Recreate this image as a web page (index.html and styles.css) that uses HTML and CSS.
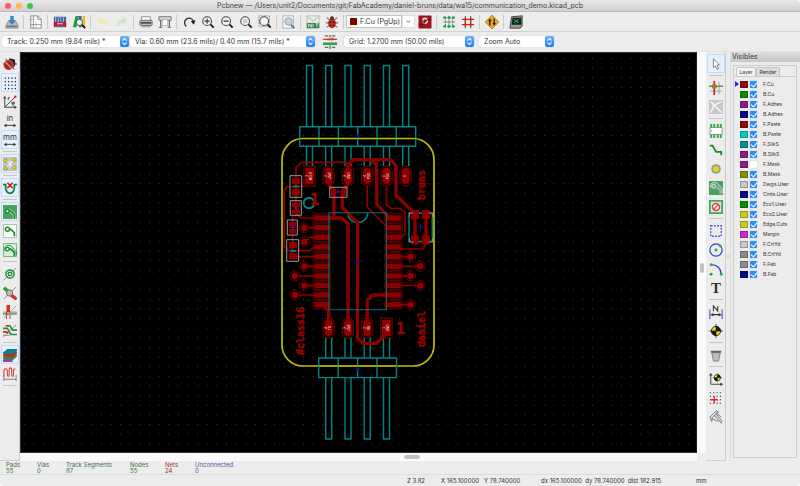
FILE: index.html
```html
<!DOCTYPE html>
<html lang="en">
<head>
<meta charset="utf-8">
<title>Pcbnew</title>
<link rel="stylesheet" href="styles.css">
</head>
<body>
<svg class="defs" aria-hidden="true">
  <defs>
    <symbol id="steps" viewBox="0 0 9 11"><path d="M2.5 4.5 4.5 2.3 6.5 4.5M2.5 6.5 4.5 8.7 6.5 6.5" fill="none" stroke="#fff" stroke-width="1.1"/></symbol>
    <symbol id="lens" viewBox="0 0 16 16"><path d="m10.5 10.5 4 4" stroke="#222" stroke-width="2.2"/><circle cx="7" cy="7" r="5" fill="#f4f4f4" stroke="#444" stroke-width="1.2"/></symbol>
    <symbol id="zone" viewBox="0 0 16 16"><path d="M2 9V5l2-2h5l6 7v4" fill="none" stroke="#178a2a" stroke-width="1"/><circle cx="5" cy="7" r="2" fill="#fff" stroke="#178a2a" stroke-width="1.6"/><path d="M7 7h2l4 4v4" fill="none" stroke="#178a2a" stroke-width="2"/></symbol>
    <symbol id="target" viewBox="0 0 16 16"><circle cx="8" cy="8" r="5.3" fill="#e8df20" stroke="#111"/><path d="M8 8V2.700A5.300 5.300 0 0 1 13.300 8zM8 8v5.300A5.300 5.300 0 0 1 2.700 8z" fill="#111"/><path d="M8 0v16M0 8h16" stroke="#111" stroke-width=".8"/></symbol>
  </defs>
</svg>
<div class="window">
  <header class="titlebar">
    <div class="lights"><i class="close"></i><i class="minimise"></i><i class="expand"></i></div>
    <h1>Pcbnew — /Users/unit2/Documents/git/FabAcademy/daniel-bruns/data/wa15/communication_demo.kicad_pcb</h1>
  </header>

  <div class="toolbar main-tools">
    <button aria-label="Save"><svg viewBox="0 0 16 16"><path d="M3 8h10l2 4v3H1v-3z" fill="#b9bdc0" stroke="#888" stroke-width=".8"/><path d="M2 12h12v2H2z" fill="#777"/><path d="M6 1h4v5h3l-5 5-5-5h3z" fill="#3a86c8"/></svg></button>
    <hr>
    <button aria-label="Page settings"><svg viewBox="0 0 16 16"><path d="M2 1h8l4 4v10H2z" fill="#fff" stroke="#777" stroke-width=".9"/><path d="M10 1v4h4M5 1v14M2 11h12" fill="none" stroke="#777" stroke-width=".8"/><path d="M0 5h7M8 8v8" stroke="#999" stroke-width=".6"/></svg></button>
    <hr>
    <button aria-label="Module editor"><svg viewBox="0 0 16 16"><path d="M1 2h14v12H1z" fill="#3f63a0"/><path d="M3 1v13M6 1v13M9 1v13M12 1v13" stroke="#adc3e4"/><path d="M1 8h4v5H1zM6 8h4v5H6zM11 8h4v5h-4z" fill="#c41420"/><path d="M5 10h6" stroke="#fff"/></svg></button>
    <button aria-label="Module viewer"><svg viewBox="0 0 16 16"><path d="M1 14 4 1h4L5 14z" fill="#19a33b"/><path d="M8 1h3v13H8z" fill="#2967b1"/><path d="M12 1h3v13h-3z" fill="#e7bd18"/><path d="m11 11 4 4" stroke="#111" stroke-width="2"/><circle cx="8.500" cy="8.500" r="3.600" fill="#e6eef5" stroke="#444"/></svg></button>
    <hr>
    <button aria-label="Undo"><svg viewBox="0 0 16 16"><path d="m2 6 5-4v3c5 0 8 3 6 9-1-4-3-5-6-5v2z" fill="#f3e7a4"/></svg></button>
    <button aria-label="Redo"><svg viewBox="0 0 16 16"><path d="M14 6 9 2v3c-5 0-8 3-6 9 1-4 3-5 6-5v2z" fill="#c9e6c2"/></svg></button>
    <hr>
    <button aria-label="Print"><svg viewBox="0 0 16 16"><path d="M3 2h10v5H3z" fill="#fff" stroke="#888"/><rect x="1" y="6" width="14" height="6" rx="1" fill="#bbb" stroke="#666"/><path d="M2 9h12" stroke="#222" stroke-width="1.500"/><path d="M3 13h10v1H3z" fill="#777"/></svg></button>
    <button aria-label="Plot"><svg viewBox="0 0 16 16"><path d="M1 2h14v4H1z" fill="#ddd" stroke="#666"/><path d="M3 6v8M13 6v8M1 14h4M11 14h4" stroke="#666" stroke-width="1.300"/><path d="M5 5h6v7H5z" fill="#fff" stroke="#999" stroke-width=".7"/></svg></button>
    <hr>
    <button aria-label="Redraw"><svg viewBox="0 0 16 16"><path d="M5 13A5.200 5.200 0 1 1 13 7" fill="none" stroke="#333" stroke-width="1.500"/><path d="m10 7 5.500-1-2 5z" fill="#222"/></svg></button>
    <button aria-label="Zoom in"><svg viewBox="0 0 16 16"><use href="#lens"/><path d="M4 7h6M7 4v6" stroke="#333" stroke-width="1.200"/></svg></button>
    <button aria-label="Zoom out"><svg viewBox="0 0 16 16"><use href="#lens"/><path d="M4 7h6" stroke="#333" stroke-width="1.200"/></svg></button>
    <button aria-label="Zoom to fit"><svg viewBox="0 0 16 16"><use href="#lens"/><path d="M4.500 4.500h5v5h-5z" fill="#ccc"/></svg></button>
    <button aria-label="Zoom to selection"><svg viewBox="0 0 16 16"><path d="M1 1h12v12H1z" fill="none" stroke="#888" stroke-dasharray="2 1"/><use href="#lens"/></svg></button>
    <hr>
    <button aria-label="Find"><svg viewBox="0 0 16 16"><path d="M1 1h12v14H1z" fill="#fafafa" stroke="#aaa"/><path d="m10 11 4 4" stroke="#666" stroke-width="2"/><circle cx="7.500" cy="7.500" r="4.300" fill="#c2d5e6" stroke="#8997a3"/></svg></button>
    <hr>
    <button aria-label="Netlist"><svg viewBox="0 0 16 16"><path d="M1 1h14v14H1z" fill="#e7efe6" stroke="#9aad98" stroke-width=".7"/><path d="m2 2 6 5 6-5" fill="none" stroke="#aaa"/><path d="M1 9h14v6H1z" fill="#27824a"/><path d="M3 14v-4l3 4v-4M8 10v4M11 10h3M12.500 10v4" fill="none" stroke="#fff" stroke-width=".9"/></svg></button>
    <button aria-label="Design rules check"><svg viewBox="0 0 16 16"><path d="m2 3 4 3M14 3l-4 3M1 9h14M2 14l4-3M14 14l-4-3" stroke="#333"/><ellipse cx="8" cy="9.500" rx="4.500" ry="5.500" fill="#cf2c20"/><circle cx="8" cy="3.500" r="2.200" fill="#552522"/><path d="M8 4v11" stroke="#741"/><circle cx="6" cy="8" r="1" fill="#411"/><circle cx="10" cy="8" r="1" fill="#411"/><circle cx="6" cy="12" r="1" fill="#411"/><circle cx="10" cy="12" r="1" fill="#411"/></svg></button>
    <hr>
    <div class="layer-pick"><span class="chip"></span><select aria-label="Layer"><option>F.Cu (PgUp)</option></select><svg viewBox="0 0 13 13"><path d="m4.500 5.500 2 2 2-2" fill="none" stroke="#444"/></svg></div>
    <button aria-label="Layer pair"><svg viewBox="0 0 16 16"><path d="M1 1h14v14H1z" fill="#a8121a" stroke="#711" stroke-width=".7"/><path d="M1 11h4l6-6h4" fill="none" stroke="#6e0c12" stroke-width="2"/><circle cx="8" cy="6.500" r="3.600" fill="#d8d8d8"/><circle cx="8" cy="6.500" r="1.500" fill="#333"/><path d="m3 4 4 5 6-6" fill="none" stroke="#a8121a" stroke-width="1.500"/></svg></button>
    <hr>
    <button aria-label="Footprint mode"><svg viewBox="0 0 16 16"><path d="M4 3h8v10H4z" fill="none" stroke="#666" stroke-dasharray="1.500 1"/><path d="M1 8h14M8 1v14" stroke="#666" stroke-width=".8"/><g fill="#22a546"><circle cx="3" cy="3" r="1.700"/><circle cx="8" cy="3" r="1.700"/><circle cx="13" cy="3" r="1.700"/><circle cx="3" cy="13" r="1.700"/><circle cx="8" cy="13" r="1.700"/><circle cx="13" cy="13" r="1.700"/></g></svg></button>
    <button aria-label="Track mode"><svg viewBox="0 0 16 16"><path d="M5 1v14M11 1v14" stroke="#2aa44a" stroke-width="1.500"/><path d="M1 5h14M1 11h14" stroke="#d72020" stroke-width="1.500"/><path d="M5 3v10M11 3v10" stroke="#d72020" stroke-width="1.500"/></svg></button>
    <hr>
    <button aria-label="Autorouter"><svg viewBox="0 0 16 16"><path d="m8 0 8 8-8 8-8-8z" fill="#e9a61c" stroke="#8a6410" stroke-width=".6"/><path d="M5.500 12V5M10.500 4v7" stroke="#222" stroke-width="1.500"/><path d="M3.500 7 5.500 4l2 3zM8.500 9l2 3 2-3z" fill="#222"/></svg></button>
    <hr>
    <button aria-label="Scripting console"><svg viewBox="0 0 16 16"><path d="m3 2 12-1v11l-2 3H1z" fill="#999" stroke="#333"/><path d="M4 3h10v8H3z" fill="#112217"/><path d="m6 5 5 4M11 5 6 9" fill="none" stroke="#2db060" stroke-width="1.300"/></svg></button>
  </div>

  <div class="toolbar option-tools">
    <div class="pick width-pick"><select aria-label="Track width"><option>Track: 0.250 mm (9.84 mils) *</option></select><svg><use href="#steps"/></svg></div>
    <div class="pick via"><select aria-label="Via size"><option>Via: 0.60 mm (23.6 mils)/ 0.40 mm (15.7 mils) *</option></select><svg><use href="#steps"/></svg></div>
    <button aria-label="Automatic track width"><svg viewBox="0 0 16 16"><path d="M0 5h6M8 5h8" stroke="#d33" stroke-width="1.500"/><path d="M5 5h6V3" fill="none" stroke="#d33" stroke-width="2"/><path d="M0 10h16" stroke="#2a4" stroke-width="3"/><path d="M8 0v3M8 12v4M2 1h4M10 1h4M2 14h4M10 14h4" stroke="#333"/></svg></button>
    <div class="pick grid-size"><select aria-label="Grid"><option>Grid: 1.2700 mm (50.00 mils)</option></select><svg><use href="#steps"/></svg></div>
    <div class="pick zoom"><select aria-label="Zoom"><option>Zoom Auto</option></select><svg><use href="#steps"/></svg></div>
  </div>

  <main class="workspace">
    <div class="side left">
      <button aria-label="Disable DRC"><svg viewBox="0 0 16 16"><path d="m3 2 10 12M14 3 3 13M0 8h16M8 1v5" stroke="#222"/><ellipse cx="10" cy="7" rx="4" ry="5" fill="#222"/><circle cx="6.500" cy="9" r="5" fill="#8a2f2d" stroke="#ce3d35" stroke-width="1.700"/><path d="m3 6 7 7" stroke="#e88" stroke-width="1.500"/></svg></button>
      <button class="on" aria-label="Show grid"><svg viewBox="0 0 16 16"><path d="M2 2.500h13M2 6.500h13M2 10.500h13M2 14.500h13" stroke="#111" stroke-width="1.300" stroke-dasharray="1.300 2.500"/></svg></button>
      <button aria-label="Polar coordinates"><svg viewBox="0 0 16 16"><path d="M2 2v12h13M2 14 14 2" fill="none" stroke="#444" stroke-width="1.100"/><path d="m0 4 2-3 2 3zM13 12l3 2-3 2z" fill="#444"/><circle cx="14" cy="2" r="1.500" fill="#e22"/><path d="M6 6V3h2M10 8v2h3V8h-1.500v5" fill="none" stroke="#444"/></svg></button>
      <button aria-label="Inches"><svg viewBox="0 0 16 16"><text x="8" y="8">in</text><path d="M2 13h12" stroke="#333"/><path d="m1 13 3-2v4zM15 13l-3-2v4z" fill="#333"/></svg></button>
      <button class="on" aria-label="Millimetres"><svg viewBox="0 0 16 16"><text x="8" y="8">mm</text><path d="M2 13h12" stroke="#333"/><path d="m1 13 3-2v4zM15 13l-3-2v4z" fill="#333"/></svg></button>
      <hr>
      <button class="on" aria-label="Ratsnest"><svg viewBox="0 0 16 16"><path d="M0 0h16v16H0z" fill="#c4c4c4"/><path d="m3 3 10 10M13 3 3 13M8 4v9" stroke="#fff"/><g fill="#dfd51d" stroke="#887f10" stroke-width=".6"><circle cx="3" cy="4" r="2"/><circle cx="13" cy="3" r="2"/><circle cx="3" cy="13" r="2"/><circle cx="13" cy="12" r="2"/></g></svg></button>
      <hr>
      <button class="on" aria-label="Auto delete track"><svg viewBox="0 0 16 16"><path d="M0 4h3v4q1 6 5 6t5-6V4h3" fill="none" stroke="#15803a" stroke-width="2"/><path d="m5 2 6 6m0-6L5 8" stroke="#d91515" stroke-width="2"/></svg></button>
      <hr>
      <button class="on" aria-label="Show filled zones"><svg viewBox="0 0 16 16"><path d="M0 0h16v16H0z" fill="#46a65e"/><path d="M2 9V5l2-2h5l6 7v4" fill="none" stroke="#e4f4e7" stroke-width=".9"/><path d="M7 7h2l4 4v4" fill="none" stroke="#e4f4e7" stroke-width="3.400"/><use href="#zone"/></svg></button>
      <button aria-label="Hide filled zones"><svg viewBox="0 0 16 16"><path d="M.5.5h15v15H.5z" fill="#fff" stroke="#8fc39a"/><circle cx="5" cy="6" r="2.300" fill="none" stroke="#178a2a" stroke-width="1.700"/><path d="M7 6h2l4 4v4" fill="none" stroke="#178a2a" stroke-width="2"/></svg></button>
      <button aria-label="Zone outlines"><svg viewBox="0 0 16 16"><path d="M.5.5h15v15H.5z" fill="#d9ecdc" stroke="#5fae70"/><use href="#zone"/></svg></button>
      <hr>
      <button aria-label="Via outlines"><svg viewBox="0 0 16 16"><path d="M1 15 15 1" stroke="#888"/><circle cx="8" cy="8" r="4.700" fill="none" stroke="#248e40" stroke-width="1.700"/><circle cx="8" cy="8" r="2" fill="#fff" stroke="#248e40" stroke-width="1.700"/></svg></button>
      <button aria-label="Pad outlines"><svg viewBox="0 0 16 16"><path d="M1 15 15 1" stroke="#888"/><path d="m1 2 6 5" stroke="#2aa03c" stroke-width="4"/><path d="m9 10 5 4" stroke="#e02a20" stroke-width="4" stroke-linecap="round"/><circle cx="7.500" cy="8" r="3.600" fill="#bbb" stroke="#666"/></svg></button>
      <button aria-label="Track outlines"><svg viewBox="0 0 16 16"><path d="M1 15 15 1M0 8h16M0 11h16" stroke="#777" stroke-width=".7"/><path d="M0 9.500h7M9 9.500h7" stroke="#289145" stroke-width="1.200"/><path d="M6 0v8" stroke="#e02a20" stroke-width="4"/><path d="M4 8v8M8 8v8" stroke="#e02a20"/></svg></button>
      <button aria-label="High contrast"><svg viewBox="0 0 16 16"><path d="M0 15 15 1M0 13h7l3-3" fill="none" stroke="#888"/><path d="M0 5h5l4 7h7" fill="none" stroke="#289145" stroke-width="1.800"/><path d="M5 2h3l3 5h5" fill="none" stroke="#248e40" stroke-width="1.800"/><path d="M3 2h4M0 9h4l2 2" fill="none" stroke="#d22" stroke-width="1.800"/></svg></button>
      <hr>
      <button class="on" aria-label="Layers manager"><svg viewBox="0 0 16 16"><path d="m0 14 5-4h11l-5 4v2H0z" fill="#a03ab4"/><path d="m0 11 5-4h11v2l-5 4H0z" fill="#239044"/><path d="m0 8 5-4h11v2l-5 4H0z" fill="#d22020"/><path d="m0 5 5-4h11v2l-5 4H0z" fill="#137f86"/></svg></button>
      <button aria-label="Microwave tools"><svg viewBox="0 0 16 16"><path d="M1 11V5q0-3 2-3t2 3v4q0 1.500 1 1.500T7 9V4q0-3 1.500-3T10 4v5q0 1.500 1 1.500T12 9V5q0-3 2-3" fill="none" stroke="#d34040" stroke-width="1.200"/><path d="M1 9v7M15 9v7M1 14h14" stroke="#666" stroke-width=".9"/></svg></button>
      <hr>
    </div>

    <svg class="board" viewBox="20 52 677 401" preserveAspectRatio="xMidYMid slice" role="img" aria-label="Printed circuit board">
      <defs>
        <pattern id="dots" x="23.800" y="58" width="9.630" height="9.630" patternUnits="userSpaceOnUse"><path d="M0 0h1v1H0z" fill="#3c3c3c"/></pattern>
        <g id="oval"><rect x="-5.700" y="-10" width="11.400" height="20" rx="5.700" fill="#100" stroke="#700000"/><rect x="-4" y="-8" width="8" height="16" rx="4" fill="#940000"/></g>
        <g id="square"><rect x="-5.700" y="-10" width="11.400" height="20" fill="#100" stroke="#700000"/><rect x="-4.300" y="-8" width="8.600" height="16" fill="#940000"/></g>
        <g id="smd"><rect x="-9" y="-4.300" width="18" height="8.600" rx="2" fill="#1c0000" stroke="#6c0000" stroke-width=".8"/><rect x="-7.500" y="-2.600" width="15" height="5.200" fill="#8c0000"/></g>
        <g id="dot"><circle r="5" fill="none" stroke="#700000" stroke-width=".9"/><circle r="3.200" fill="#940000"/></g>
        <g id="column"><use href="#smd" y="218"/><use href="#smd" y="227.700"/><use href="#smd" y="237.300"/><use href="#smd" y="247"/><use href="#smd" y="256.700"/><use href="#smd" y="266.300"/><use href="#smd" y="276"/><use href="#smd" y="285.500"/><use href="#smd" y="295"/><use href="#smd" y="304.700"/></g>
      </defs>
      <path d="M20 52h677v401H20z" fill="#000"/>
      <path d="M22 54h673v397H22z" fill="url(#dots)"/>
      <path d="M21 52.500h676v400H20.500v-400" fill="none" stroke="#333"/>
      <rect x="282" y="138.500" width="152" height="227.500" rx="21" fill="none" stroke="#bcbc00" stroke-width="1.700"/>
      <g class="fab">
        <path d="M306.500 126.700V65.500h6v61.200m13.200 0V65.500h6v61.200m13.300 0V65.500h6v61.200m13.200 0V65.500h6v61.200m13.300 0V65.500h6v61.200m13.200 0V65.500h6v61.200"/>
        <path d="M306.500 146v20m6-20v20m13.200-20v20m6-20v20m13.300-20v20m6-20v20m13.200-20v20m6-20v20m13.300-20v20m6-20v20m13.200-20v20m6-20v20"/>
        <path d="M325.700 338v20m6-20v20m13.300-20v20m6-20v20m13.200-20v20m6-20v20m13.300-20v20m6-20v20"/>
        <path d="M325.700 378v61h6v-61m13.300 0v61h6v-61m13.200 0v61h6v-61m13.300 0v61h6v-61"/>
        <path d="M299.700 126.700h116v19.600h-116zM319 126.700v19.600m19.400-19.600v19.600m19.300-19.600v19.600m19.300-19.600v19.600m19.300-19.600v19.600M318.700 358h77.800v19.600h-77.800zM338.200 358v19.600m19.400-19.600v19.600m19.400-19.600v19.600"/>
        <path d="M347.700 212.700a10 10 0 0 0 20 0M409 213.300h23.300v28.200H409z"/>
        <circle cx="309" cy="203" r="5.300" stroke-width="1.900"/>
      </g>
      <path d="M300 138.500h116M319 366h77" stroke="#bcbc00" stroke-width="1.200"/>
      <use href="#column" x="322"/><use href="#column" x="393.500"/>
      <g class="copper thin">
        <path d="M348 164l-2-1.700h-44.300l-5.700 5V214l5 4h16M309.500 182v4l-23 1-2.200 4v56l3.700 3.700h22l4-3.700M292.500 216v38l4 2.700h22"/>
        <path d="M367.200 180v27l18 18M386.500 180v25l4.500 3.500h9l5 4V234l-4 3.300M426 243l-3 6h-22"/>
        <path d="M304.300 227.700H318M304.300 242l5-4.700h9M304.300 266.300H318M295 276h24M304.300 285.500H318M295 295h24M410.700 256.700H398M420.300 266.300H398M410.700 276H398M420.300 285.500H398M410.700 304.700H398"/>
      </g>
      <g class="copper thick">
        <path d="M348 174v-8l4.700-6.300h38l5.300 6.300v29l16 16M370 159.700l6.700 5V204l11 12M328.700 178v6l5.300 7v27M348 178v6l-5.700 8v15.500l15.200 15V338l5.500 5.300h13.700l9.500-9.500V328M324 218h17.700l6.300 5.500V328M388 295h-15.500l-5.300 5.300V328M323 305l5.700 5.700V328"/>
        <path d="M415 214v26M426 214v26"/>
      </g>
      <path d="M329 212.700h57.300v97H329z" fill="none" stroke="#008484" stroke-width="1.100" opacity=".85"/>
      <use href="#square" x="309.500" y="176"/><use href="#oval" x="328.700" y="176"/><use href="#oval" x="348" y="176"/><use href="#oval" x="367.200" y="176"/><use href="#oval" x="386.500" y="176"/><use href="#oval" x="405.700" y="176"/>
      <use href="#oval" x="328.700" y="328"/><use href="#oval" x="348" y="328"/><use href="#oval" x="367.200" y="328"/><use href="#square" x="386.500" y="328"/>
      <path class="copper thick" d="M348 170v-4l4.700-6.300M328.700 182v2l3 4M348 182v2l-3 4M328.700 317v5M348 317v5M367.200 317v5M386.500 332l-5 6.500"/>
      <use href="#dot" x="304.300" y="227.700"/><use href="#dot" x="304.300" y="242"/><use href="#dot" x="304.300" y="266.300"/><use href="#dot" x="295" y="276"/><use href="#dot" x="304.300" y="285.500"/><use href="#dot" x="295" y="295"/>
      <use href="#dot" x="410.700" y="256.700"/><use href="#dot" x="420.300" y="266.300"/><use href="#dot" x="410.700" y="276"/><use href="#dot" x="420.300" y="285.500"/><use href="#dot" x="410.700" y="304.700"/>
      <g fill="#8c0000">
        <path d="M411 210h8v9h-8zM422 210h8v9h-8zM411 235.500h8v9h-8zM422 235.500h8v9h-8z"/>
        <path d="M292 178h8v6h-8zM292 189h8v6.500h-8zM292 202.500h8v4.500h-8zM292 209.500h8v4.500h-8zM289 222h7v4.500h-7zM289 229h7v4.500h-7zM289 242h8v6.500h-8zM289 253h8v6.500h-8zM331 189h5v7h-5zM341 189h5v7h-5z"/>
      </g>
      <path d="M290 175.700h11.700v21.600H290zM290.300 200.700h11v14.600h-11zM287.300 220h10v15h-10zM286.700 239.700h12v21.600h-12zM329.700 187.300H347v10h-17.300z" fill="none" stroke="#aaa" stroke-width=".9"/>
      <path d="M409.500 217v-4h4m15 0h4v4m0 21v4h-4m-15 0h-4v-4" fill="none" stroke="#899" stroke-width=".8"/>
      <path d="M293 186.500h6M290 251h6" stroke="#177" stroke-width="2"/>
      <path d="M296 205.500v5m-3-2.500h6m-6.500 17v5m-3-2.500h6m42.500-38v5m-3-2.500h6" stroke="#84008c" stroke-width=".9"/>
      <path d="M420.500 224v6m-3-3h6M357.500 134v4m-3-2h6m-3 231v4m-3-2h6m-3-109v4m-3-2h6" stroke="#1010a8" stroke-width=".9"/>
      <g class="silk">
        <text transform="translate(425 200) rotate(-90)">bruns</text>
        <text transform="translate(425 347) rotate(-90)">daniel</text>
        <text transform="translate(304 355) rotate(-90)">#class16</text>
        <text class="one" x="396" y="334">1</text>
        <text class="one" x="310" y="205">1</text>
      </g>
      <g class="pad-names">
        <text transform="translate(312 176) rotate(-90)">MCLR</text><text transform="translate(331 176) rotate(-90)">+3V3</text><text transform="translate(350 176) rotate(-90)">GND</text><text transform="translate(370 176) rotate(-90)">PGD</text><text transform="translate(389 176) rotate(-90)">PGC</text>
        <text transform="translate(331 328) rotate(-90)">TX</text><text transform="translate(350 328) rotate(-90)">+3V3</text><text transform="translate(370 328) rotate(-90)">RX</text><text transform="translate(389 328) rotate(-90)">GND</text>
        <text transform="translate(308 176) rotate(-90)">1</text><text transform="translate(327 176) rotate(-90)">2</text><text transform="translate(346 176) rotate(-90)">3</text><text transform="translate(366 176) rotate(-90)">4</text><text transform="translate(385 176) rotate(-90)">5</text><text transform="translate(406 176) rotate(-90)">6</text>
        <text transform="translate(327 328) rotate(-90)">4</text><text transform="translate(346 328) rotate(-90)">3</text><text transform="translate(366 328) rotate(-90)">2</text><text transform="translate(385 328) rotate(-90)">1</text>
      </g>
    </svg>
    <div class="scroll vertical"><i></i></div>
    <div class="scroll horizontal"><i></i></div>

    <div class="side right">
      <button class="on" aria-label="Select"><svg viewBox="0 0 16 16"><path d="m5 2 7 7H9l2 4-2 1-2-4-2 2z" fill="#fff" stroke="#777"/></svg></button>
      <hr>
      <button aria-label="Highlight net"><svg viewBox="0 0 16 16"><path d="M11.500 1v14M1 11.500h14" stroke="#aaa" stroke-width="1.200"/><path d="M6 0v16" stroke="#d22a2a" stroke-width="2"/><path d="M0 6h16" stroke="#4c9b45" stroke-width="1.700"/><circle cx="6" cy="6" r="3" fill="#a77a2e"/></svg></button>
      <button aria-label="Local ratsnest"><svg viewBox="0 0 16 16"><path d="M0 0h16v16H0z" fill="#c8c8c8"/><path d="m2 2 4 4 8-4M6 6 2 14M6 6l8 8" fill="none" stroke="#fff" stroke-width="1.500"/><circle cx="6" cy="6" r="2" fill="#eee"/></svg></button>
      <hr>
      <button aria-label="Add module"><svg viewBox="0 0 16 16"><path d="M1 4h14v8H1v-2.500a1.500 1.500 0 0 0 0-3z" fill="#fff" stroke="#777" stroke-width=".8"/><path d="M2.500 0v4m3.500-4v4m4-4v4m3.500-4v4m-11 8v4m3.500-4v4m4-4v4m3.500-4v4" stroke="#2ab038" stroke-width="2.200"/></svg></button>
      <button aria-label="Add track"><svg viewBox="0 0 16 16"><path d="M1 3h3l4 7h6v4" fill="none" stroke="#178a2a" stroke-width="2"/></svg></button>
      <button aria-label="Add via"><svg viewBox="0 0 16 16"><circle cx="8" cy="8" r="5.500" fill="#999"/><circle cx="8" cy="8" r="3.500" fill="#ded51d"/></svg></button>
      <button aria-label="Add zone"><svg viewBox="0 0 16 16"><path d="M0 0h16v16H0z" fill="#43a45e"/><path d="M2 8V4l2-2h5l6 7v5" fill="none" stroke="#eee"/><circle cx="5.500" cy="6" r="2.300" fill="#999" stroke="#eee"/><path d="M7 7h2l4 4v4" fill="none" stroke="#aaa" stroke-width="2.500"/></svg></button>
      <button aria-label="Add keepout"><svg viewBox="0 0 16 16"><path d="M1 1h14v14H1z" fill="#dce8dc" stroke="#43a45e" stroke-width="2"/><circle cx="8" cy="8" r="4" fill="#fff" stroke="#dc4040" stroke-width="1.700"/><path d="m5.500 10.500 5-5" stroke="#dc4040" stroke-width="1.500"/></svg></button>
      <hr>
      <button aria-label="Add line"><svg viewBox="0 0 16 16"><path d="M2 2h12v12H2z" fill="none" stroke="#4a5bd0" stroke-width="1.500" stroke-dasharray="2.200 1.400"/></svg></button>
      <button aria-label="Add circle"><svg viewBox="0 0 16 16"><circle cx="8" cy="8" r="7" fill="none" stroke="#2743c4" stroke-width="1.300"/><circle cx="8" cy="8" r="1.600" fill="#2aa848"/><circle cx="13" cy="3.500" r="1.600" fill="#2aa848"/></svg></button>
      <button aria-label="Add arc"><svg viewBox="0 0 16 16"><path d="M2 3q11 0 12 11" fill="none" stroke="#2743c4" stroke-width="1.500"/><g fill="#2aa848"><circle cx="2.500" cy="3" r="1.700"/><circle cx="2.500" cy="14" r="1.700"/><circle cx="14" cy="14" r="1.700"/></g></svg></button>
      <button aria-label="Add text"><svg viewBox="0 0 16 16"><text class="serif" x="8" y="14">T</text></svg></button>
      <hr>
      <button aria-label="Add dimension"><svg viewBox="0 0 16 16"><path d="M1 5v11M15 5v11" stroke="#4a5bd0" stroke-width="1.300"/><path d="M5 7V1l5 6V1M2 11h12" fill="none" stroke="#333" stroke-width="1.200"/><path d="m2 11 3-2v4zM14 11l-3-2v4z" fill="#333"/></svg></button>
      <button aria-label="Add target"><svg><use href="#target"/></svg></button>
      <hr>
      <button aria-label="Delete"><svg viewBox="0 0 16 16"><path d="m3 5 2 10h6l2-10z" fill="#aaa" stroke="#777" stroke-width=".8"/><path d="M6 6v8m2-8v8m2-8v8" stroke="#ddd" stroke-width=".7"/><rect x="2" y="3" width="12" height="2.500" rx="1" fill="#666"/></svg></button>
      <hr>
      <button aria-label="Drill origin"><svg viewBox="0 0 16 16"><path d="M2 2v12h13" fill="none" stroke="#333"/><path d="m0 4 2-3 2 3zM13 12l3 2-3 2z" fill="#333"/><use href="#target" x="4" y="1" width="11" height="11"/></svg></button>
      <button aria-label="Grid origin"><svg viewBox="0 0 16 16"><path d="M1 2h14M1 6h14M1 10h14M1 14h14" stroke="#333" stroke-width="1.300" stroke-dasharray="1.300 2.500"/><path d="M6 6v8M2 10h8" stroke="#e22" stroke-width="1.500"/></svg></button>
      <button aria-label="Measure"><svg viewBox="0 0 16 16"><path d="m1 8 7-7 3 1-7 7-1 4zM6 6l8 9 1-2-7-9M3 10l8 3M8 3l6 5" fill="#ddd" stroke="#555" stroke-width=".8"/></svg></button>
    </div>
    <div class="sash"><i></i></div>

    <aside class="panel">
      <h2>Visibles</h2>
      <div class="book">
        <div class="tabs"><button class="current">Layer</button><button>Render</button></div>
        <ul>
          <li class="active"><i class="maroon"></i><label><input type="checkbox" checked>F.Cu</label></li>
          <li><i class="green"></i><label><input type="checkbox" checked>B.Cu</label></li>
          <li><i class="purple"></i><label><input type="checkbox" checked>F.Adhes</label></li>
          <li><i class="navy"></i><label><input type="checkbox" checked>B.Adhes</label></li>
          <li><i class="maroon"></i><label><input type="checkbox" checked>F.Paste</label></li>
          <li><i class="cyan"></i><label><input type="checkbox" checked>B.Paste</label></li>
          <li><i class="teal"></i><label><input type="checkbox" checked>F.SilkS</label></li>
          <li><i class="purple"></i><label><input type="checkbox" checked>B.SilkS</label></li>
          <li><i class="purple"></i><label><input type="checkbox">F.Mask</label></li>
          <li><i class="olive"></i><label><input type="checkbox" checked>B.Mask</label></li>
          <li><i class="silver"></i><label><input type="checkbox" checked>Dwgs.User</label></li>
          <li><i class="navy"></i><label><input type="checkbox" checked>Cmts.User</label></li>
          <li><i class="green"></i><label><input type="checkbox" checked>Eco1.User</label></li>
          <li><i class="yellow"></i><label><input type="checkbox" checked>Eco2.User</label></li>
          <li><i class="yellow"></i><label><input type="checkbox" checked>Edge.Cuts</label></li>
          <li><i class="magenta"></i><label><input type="checkbox" checked>Margin</label></li>
          <li><i class="silver"></i><label><input type="checkbox" checked>F.CrtYd</label></li>
          <li><i class="grey"></i><label><input type="checkbox" checked>B.CrtYd</label></li>
          <li><i class="grey"></i><label><input type="checkbox" checked>F.Fab</label></li>
          <li><i class="navy"></i><label><input type="checkbox" checked>B.Fab</label></li>
        </ul>
      </div>
    </aside>
  </main>

  <dl class="counts">
    <div><dt>Pads</dt><dd>55</dd></div>
    <div><dt>Vias</dt><dd>0</dd></div>
    <div><dt>Track Segments</dt><dd>87</dd></div>
    <div><dt>Nodes</dt><dd>55</dd></div>
    <div class="nets"><dt>Nets</dt><dd>24</dd></div>
    <div class="open"><dt>Unconnected</dt><dd>0</dd></div>
  </dl>
  <footer class="status">
    <span class="z">Z 3.82</span>
    <span class="xy"><span>X 165.100000</span><span>Y 78.740000</span></span>
    <span class="delta">dx 165.100000&nbsp; dy 78.740000&nbsp; dist 182.915</span>
    <span class="unit">mm</span>
  </footer>
</div>
</body>
</html>
```
FILE: styles.css
```css
* { box-sizing: border-box; }
body { margin: 0; background: #fff; font: 7px/9px Inter, "Liberation Sans", sans-serif; color: #333; }
h1, h2, ul, dl, dd { margin: 0; padding: 0; font: inherit; }
button { border: 0; padding: 0; background: none; font: inherit; color: inherit; }
svg { display: block; }
.defs { position: absolute; width: 0; height: 0; }

.window { display: flex; flex-direction: column; min-height: 100vh; background: #ececec; border-radius: 4px; overflow: hidden; }

.titlebar { position: relative; height: 12px; background: linear-gradient(#e9e7e9, #d2d0d2); border-bottom: 1px solid #bcbabc; text-align: center; }
.titlebar h1 { line-height: 12px; color: #444; white-space: nowrap; }
.lights { position: absolute; left: 5px; top: 3px; display: flex; gap: 5px; }
.lights i { width: 6px; height: 6px; border-radius: 50%; }
.close { background: #fc5b57; }
.minimise { background: #fdbc40; }
.expand { background: #34c84a; }

.toolbar { display: flex; align-items: center; height: 20px; border-bottom: 1px solid #d2d2d2; }
.toolbar button { display: grid; place-items: center; width: 19px; height: 18px; }
.toolbar button svg { width: 14px; height: 14px; }
.toolbar hr { width: 1px; height: 14px; margin: 0 2px; border: 0; background: #ccc; }
.main-tools { padding-left: 2px; }
.layer-pick { position: relative; display: flex; align-items: center; width: 69px; height: 13px; }
.layer-pick select { appearance: none; width: 56px; height: 13px; padding: 0 0 0 13px; border: 1px solid #c4c4c4; border-radius: 0; background: #fff; font: inherit; color: #333; }
.chip { position: absolute; left: 4px; width: 7px; height: 7px; background: #840000; }
.layer-pick svg { width: 13px; height: 13px; background: #fff; border: 1px solid #ddd; }

.option-tools { padding-left: 2px; border-bottom-color: #e2e2e2; }
.option-tools button { width: 29px; }
.pick { position: relative; height: 11px; }
.pick select { appearance: none; width: 100%; height: 11px; padding: 0 10px 0 5px; border: 0; border-radius: 2px; background: #fff; box-shadow: 0 0 1px #aaa; font: inherit; color: #333; }
.pick svg { position: absolute; right: 0; top: 0; width: 9px; height: 11px; border-radius: 2px; background: linear-gradient(#68b1fa, #1a7cf5); pointer-events: none; }
.width-pick { width: 127px; margin-right: 1px; }
.via { width: 185px; }
.grid-size { width: 130px; margin-right: 5px; }
.zoom { width: 75px; }

.workspace { flex: 1; display: grid; grid-template-columns: 20px 1fr 9px 20px 5px 69px; grid-template-rows: minmax(0, 1fr) 8px; }
.side { grid-row: 1 / 3; display: flex; flex-direction: column; align-items: center; padding-top: 2px; border-right: 1px solid #ccc; border-bottom: 1px solid #ccc; }
.side button { display: grid; place-items: center; width: 18px; height: 19px; border: 1px solid transparent; flex: none; }
.side button svg { width: 14px; height: 14px; }
.side .on { background: #e4f0fd; border-color: #c3dcf5; }
.side hr { width: 14px; height: 1px; margin: 2px 0; border: 0; background: #c6c6c6; flex: none; }
.side text { font-size: 9px; text-anchor: middle; fill: #333; }
.side .serif { font: bold 17px "Liberation Serif", serif; }
.left { grid-column: 1; }
.right { grid-column: 4; }
.board { grid-column: 2; grid-row: 1; width: 100%; height: 100%; min-height: 0; background: #000; }
.scroll { background: #fafafa; display: grid; place-items: center; }
.scroll i { background: #c1c1c1; border-radius: 2px; }
.vertical { grid-column: 3; grid-row: 1; padding-top: 30px; }
.vertical i { width: 4px; height: 10px; }
.horizontal { grid-column: 2; grid-row: 2; padding-left: 107px; }
.horizontal i { width: 16px; height: 4px; }
.sash { grid-column: 5; grid-row: 1 / 3; display: grid; place-items: center; border-right: 1px solid #ddd; }
.sash i { width: 3px; height: 3px; border: 1px solid #ccc; border-radius: 50%; }

.fab { fill: none; stroke: #008484; stroke-width: 1.4; }
.copper { fill: none; stroke: #8c0000; stroke-linejoin: round; stroke-linecap: round; }
.thin { stroke-width: 1.7; }
.thick { stroke-width: 3.3; }
.silk { font: bold 10px "DejaVu Sans Mono", monospace; fill: #9c0000; stroke: #9c0000; stroke-width: .4; }
.silk .one { font-size: 15px; }
.pad-names { font: 3px "Liberation Sans", sans-serif; fill: #fff; text-anchor: middle; }

.panel { grid-column: 6; grid-row: 1 / 3; display: flex; flex-direction: column; padding-bottom: 3px; }
.panel h2 { height: 10px; padding-left: 1px; line-height: 10px; background: linear-gradient(#ddd, #c6c6c6); }
.book { flex: 1; margin: 3px 3px 0 2px; border: 1px solid #ccc; }
.tabs { display: flex; padding: 1px 0 0 2px; border-bottom: 1px solid #ccc; }
.tabs button { width: 24px; height: 9px; border: 1px solid #c4c4c4; border-bottom: 0; border-radius: 2px 2px 0 0; background: #ddd; font-size: 5px; line-height: 8px; }
.tabs .current { width: 20px; background: #f3f3f3; }
.panel ul { list-style: none; padding-top: 2px; }
.panel li { position: relative; display: flex; align-items: center; gap: 2px; height: 10px; padding-left: 6px; }
.panel li i { width: 8px; height: 7px; border: 1px solid rgba(0, 0, 0, .25); }
.panel .active::before { content: ""; position: absolute; left: 1px; border-left: 4px solid #2424e8; border-top: 3px solid transparent; border-bottom: 3px solid transparent; }
.panel label { display: flex; align-items: center; gap: 6px; font-size: 5px; line-height: 10px; }
.panel input { appearance: none; display: grid; place-items: center; width: 7px; height: 7px; margin: 0; border-radius: 1px; background: #fff; box-shadow: 0 0 1px #999; }
.panel input:checked { background: #2b8df8; }
.panel input:checked::after { content: ""; width: 3px; height: 5px; border: solid #fff; border-width: 0 1px 1px 0; transform: rotate(40deg); }
.maroon { background: #8c0c0c; }
.green { background: #0c8c0c; }
.purple { background: #8c1c8c; }
.navy { background: #08088c; }
.cyan { background: #0cc8c8; }
.teal { background: #0c8c8c; }
.olive { background: #8c8c0c; }
.silver { background: #c8c8c8; }
.yellow { background: #cccc18; }
.magenta { background: #cc2ccc; }
.grey { background: #8c8c8c; }

.counts { display: flex; height: 14px; padding: 1px 6px 0; border-bottom: 1px solid #ddd; font-size: 6px; line-height: 6px; color: #3f6e4c; }
.counts div { width: 35px; white-space: nowrap; }
.counts div:nth-child(1) { width: 31px; }
.counts div:nth-child(2) { width: 29px; }
.counts div:nth-child(3) { width: 64px; }
.counts .nets { width: 30px; color: #a03038; }
.counts .open { color: #5252a8; }
.status { display: flex; justify-content: flex-end; height: 11px; font-size: 6px; line-height: 11px; white-space: nowrap; }
.z { width: 34px; }
.xy { display: flex; gap: 5px; width: 100px; }
.delta { width: 155px; }
.unit { width: 104px; }
```
